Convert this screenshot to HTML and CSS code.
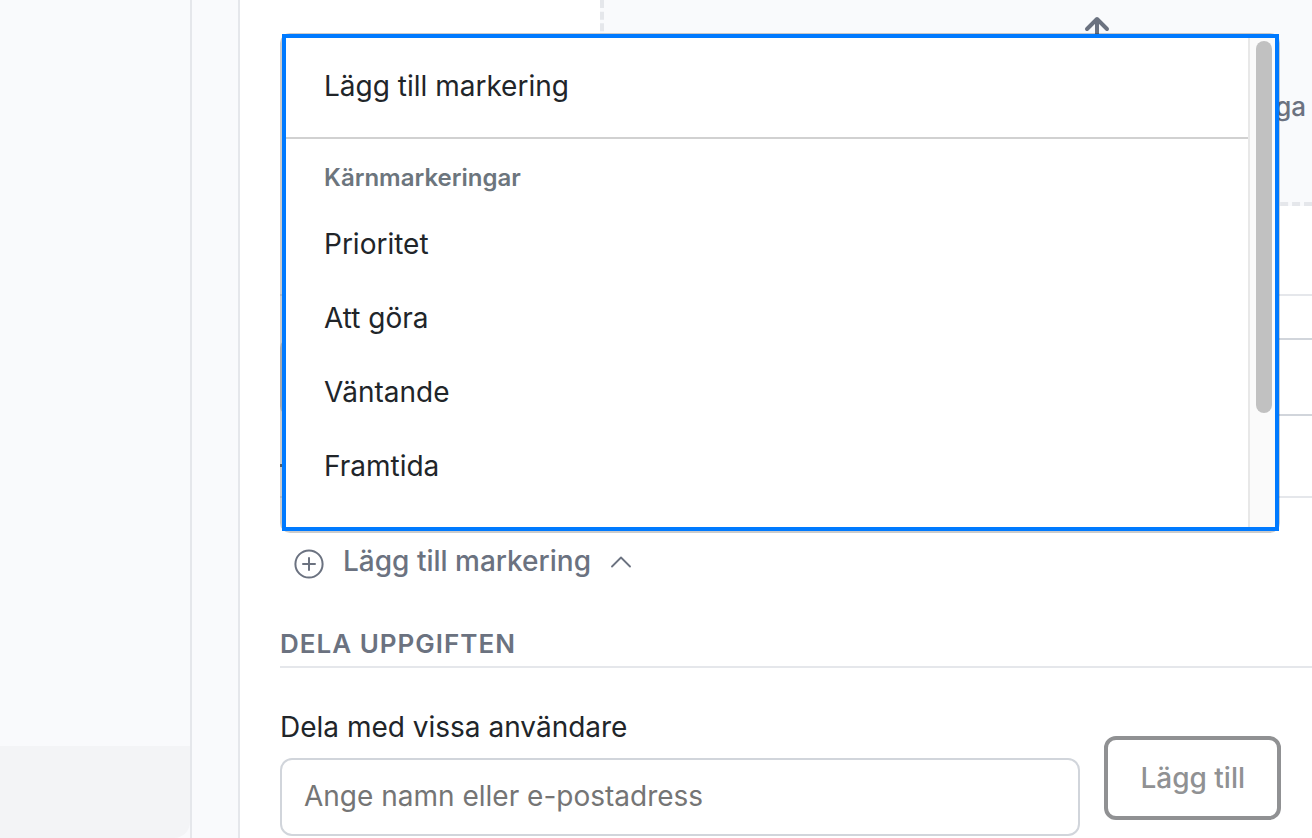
FILE: index.html
```html
<!DOCTYPE html>
<html lang="sv">
<head>
<meta charset="utf-8">
<title>Dela uppgiften</title>
<link rel="stylesheet" href="styles.css">
</head>
<body>
<div class="app">
  <aside class="sidebar"><div class="sidebar-item"></div></aside>
  <div class="gutter"></div>
  <main class="task">
    <section class="details">
      <div class="dropzone">
        <svg class="arrow" width="28" height="28" viewBox="0 0 28 28" fill="none" stroke="#6b7280" stroke-width="4" stroke-linecap="round" stroke-linejoin="round"><path d="M14 26V4M4 13L14 3L24 13"/></svg>
        <span class="drop-text">ga</span>
      </div>
      <div class="rule"></div>
      <div class="field"></div>
      <div class="mark"></div>
      <div class="rule low"></div>
    </section>

    <section class="picker">
      <div class="menu-shell">
        <div class="menu">
          <div class="options" role="listbox" aria-label="Lägg till markering">
            <button class="option first" role="option">Lägg till markering</button>
            <div class="group">Kärnmarkeringar</div>
            <button class="option" role="option">Prioritet</button>
            <button class="option" role="option">Att göra</button>
            <button class="option" role="option">Väntande</button>
            <button class="option" role="option">Framtida</button>
          </div>
          <div class="track"><div class="thumb"></div></div>
        </div>
      </div>
      <button class="toggle" aria-expanded="true">
        <svg class="plus" width="30" height="30" viewBox="0 0 30 30" fill="none" stroke="#6b7280" stroke-width="2" stroke-linecap="round"><circle cx="15" cy="15" r="13.6"/><path d="M15 9V21M9 15H21"/></svg>
        <span>Lägg till markering</span>
        <svg class="chevron" width="20" height="12" viewBox="0 0 20 12" fill="none" stroke="#6b7280" stroke-width="1.8" stroke-linecap="round" stroke-linejoin="round"><path d="M1 10.5L10 1.5L19 10.5"/></svg>
      </button>
    </section>

    <section class="share">
      <h2>DELA UPPGIFTEN</h2>
      <form class="share-form">
        <div class="share-field">
          <label for="user">Dela med vissa användare</label>
          <input id="user" type="text" placeholder="Ange namn eller e-postadress">
        </div>
        <button class="add" type="button">Lägg till</button>
      </form>
    </section>
  </main>
</div>
</body>
</html>
```
FILE: styles.css
```css
* { box-sizing: border-box; }

body {
  margin: 0;
  background: #fff;
  color: #212529;
  font: 28px/40px Inter, "Liberation Sans", sans-serif;
}

button, input { font: inherit; }

.app {
  display: flex;
  height: 100vh;
  overflow: hidden;
}

.sidebar {
  flex: 0 0 192px;
  display: flex;
  flex-direction: column;
  justify-content: flex-end;
  background: #f9fafc;
  border-right: 2px solid #e5e7eb;
}

.sidebar-item {
  height: 92px;
  background: #f3f4f6;
  border-bottom-right-radius: 16px;
}

.gutter {
  flex: 0 0 48px;
  background: #f9fafc;
  border-right: 2px solid #e5e7eb;
}

.task {
  flex: 1;
  min-width: 0;
  padding-left: 40px;
}

.details { height: 533px; }

.dropzone {
  display: flex;
  flex-direction: column;
  height: 206px;
  margin-left: 320px;
  padding: 16px 6px 0 0;
  background: #f9fafc;
  border: 4px dashed #e5e7eb;
  border-width: 0 0 4px 4px;
}

.arrow {
  align-self: flex-end;
  margin-right: 195px;
}

.drop-text {
  margin-top: 43px;
  text-align: right;
  font-size: 26px;
  font-weight: 500;
  color: #6b7280;
}

.rule {
  height: 2px;
  margin-top: 88px;
  background: #e5e7eb;
}

.field {
  height: 78px;
  margin-top: 42px;
  border: 2px solid #d1d5db;
  border-right: 0;
  border-radius: 10px 0 0 10px;
}

.mark {
  width: 4px;
  height: 3px;
  margin-top: 48px;
  background: #6c757d;
}

.low { margin-top: 29px; }

.picker { position: relative; }

.menu-shell {
  position: absolute;
  bottom: 100%;
  left: 0;
  right: 32px;
  padding: 1px 1px 2px 2px;
  background: rgba(0, 0, 0, 0.2);
  border-radius: 10px;
}

.menu {
  display: flex;
  height: 497px;
  background: #fff;
  border: 4px solid #007aff;
}

.options {
  flex: 1;
  overflow: hidden;
}

.option {
  display: block;
  width: 100%;
  height: 74px;
  padding: 0 38px;
  border: 0;
  background: none;
  color: inherit;
  text-align: left;
}

.first {
  height: 101px;
  padding-bottom: 4px;
  border-bottom: 2px solid #d1d1d1;
}

.group {
  height: 68px;
  padding: 19px 38px;
  font-size: 24px;
  font-weight: 600;
  color: #6c757d;
}

.track {
  width: 27px;
  padding: 3px 3px 0 6px;
  background: #fafafa;
  border-left: 2px solid #e8e8e8;
}

.thumb {
  height: 372px;
  background: #c1c1c1;
  border-radius: 8px;
}

.toggle {
  display: flex;
  align-items: center;
  margin: 0;
  padding: 8px 14px;
  border: 0;
  background: none;
  font-weight: 500;
  color: #6b7280;
}

.plus { margin: 6px 19px 0 0; }
.chevron { margin: 2px 0 0 20px; }

.share { padding-top: 35px; }

h2 {
  margin: 0;
  padding-bottom: 2px;
  border-bottom: 2px solid #e5e7eb;
  font-size: 26px;
  font-weight: 600;
  letter-spacing: 1px;
  color: #6b7280;
}

.share-form {
  display: flex;
  align-items: flex-end;
  gap: 24px;
  padding: 39px 31px 0 0;
}

.share-field {
  flex: 1;
  min-width: 0;
}

label {
  display: block;
  margin-bottom: 11px;
}

.share-field input {
  display: block;
  width: 100%;
  height: 78px;
  padding: 0 22px 2px;
  border: 2px solid #d1d5db;
  border-radius: 12px;
  background: #fff;
}

.share-field input::placeholder { color: #757575; }

.add {
  height: 84px;
  margin-bottom: 16px;
  padding: 0 32px;
  border: 4px solid #909193;
  border-radius: 12px;
  background: #fff;
  font-weight: 500;
  color: #909193;
}
```
